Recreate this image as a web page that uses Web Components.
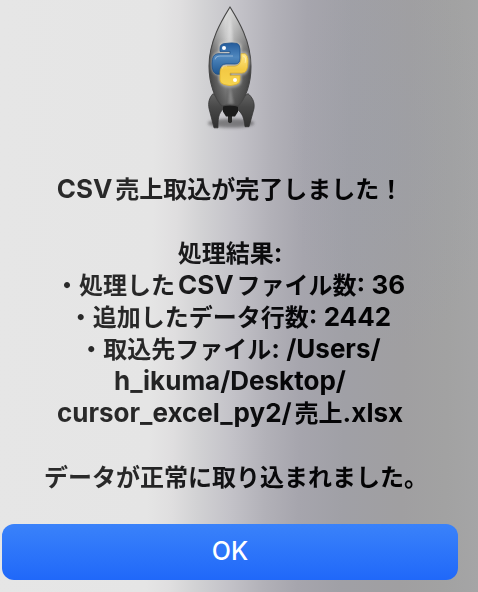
<!DOCTYPE html>
<html lang="ja">
<head>
<meta charset="utf-8">
<meta name="viewport" content="width=device-width, initial-scale=1">
<title>CSV売上取込</title>
<style>
html { min-height: 100%; }
body {
  margin: 0;
  min-height: 100vh;
  font-family: Inter, "Noto Sans CJK JP", sans-serif;
  background:
    radial-gradient(ellipse 22% 34% at 82% 26%, rgba(152,158,172,.25), rgba(152,158,172,0)),
    linear-gradient(91deg, #e6e6e6 0%, #e5e5e5 32%, #dfdedf 37%, #d2d2d4 42%, #c3c2c8 49%, #b2b1b8 56%, #a6a5ad 63%, #a0a0a6 72%, #a09fa1 84%, #a2a2a2 93%, #a5a5a6 100%);
}
</style>
</head>
<body>
<alert-dialog>
  <rocket-icon slot="icon"></rocket-icon>
  <alert-message>
    <message-line><latin-text gap-after>CSV</latin-text>売上取込が完了しました！</message-line>
    <message-line></message-line>
    <message-line>処理結果<latin-text>:</latin-text></message-line>
    <message-line>・処理した<latin-text gap-before gap-after>CSV</latin-text>ファイル数<latin-text>: 36</latin-text></message-line>
    <message-line>・追加したデータ行数<latin-text>: 2442</latin-text></message-line>
    <message-line>・取込先ファイル<latin-text gap-after>: /Users/<wbr>h_ikuma/Desktop/<wbr>cursor_excel_py2/</latin-text>売上<latin-text>.xlsx</latin-text></message-line>
    <message-line></message-line>
    <message-line closing>データが正常に取り込まれました。</message-line>
  </alert-message>
  <push-button slot="action">OK</push-button>
</alert-dialog>

<template id="dialog-template">
  <style>
    :host { display: flex; flex-direction: column; box-sizing: border-box; min-height: 100vh; padding: 4px 20px 12px 2px; text-align: center; }
    header { display: flex; justify-content: center; }
    main { padding: 42px 36px 30px; }
  </style>
  <header><slot name="icon"></slot></header>
  <main><slot></slot></main>
  <footer><slot name="action"></slot></footer>
</template>

<template id="message-template">
  <style>
    :host {
      display: block; font-size: 24px; font-weight: 700; line-height: 32px; color: #111;
      margin: 0 -12px; padding: 0 12px;
      background: linear-gradient(90deg, #2b2b2b 0%, #282828 28%, #141416 46%, #060608 64%, #000 100%);
      -webkit-background-clip: text; background-clip: text;
      -webkit-text-fill-color: transparent;
    }
  </style>
  <slot></slot>
</template>

<template id="line-template"><style>
    :host { display: block; min-height: 32px; }
    :host([closing]) { font-feature-settings: "halt"; }
  </style><slot></slot></template>

<template id="latin-template"><style>
    :host { display: inline; font-size: 26px; line-height: 26px; }
    :host([gap-before]) { margin-left: 3px; }
    :host([gap-after]) { margin-right: 3px; }
  </style><slot></slot></template>

<template id="button-template">
  <style>
    :host { display: block; }
    button {
      display: block; width: 100%; height: 56px; margin: 0; padding: 0 0 2px; border: 0; border-radius: 12px;
      background: linear-gradient(#3a82fa, #2068f9);
      color: #fff; font: 500 25px/32px Inter, "Noto Sans CJK JP", sans-serif;
    }
  </style>
  <button type="button"><slot></slot></button>
</template>

<template id="rocket-template">
  <style>
    :host { display: block; width: 64px; height: 128px; }
    svg { display: block; width: 100%; height: 100%; }
  </style>
  <svg viewBox="197 4 64 128" role="img" aria-label="Python">
    <defs>
      <linearGradient id="hull" x1="0" x2="1">
        <stop offset="0" stop-color="#4b4b4b"/><stop offset=".16" stop-color="#777"/><stop offset=".4" stop-color="#b5b5b5"/>
        <stop offset=".6" stop-color="#999"/><stop offset=".85" stop-color="#6c6c6c"/><stop offset="1" stop-color="#484848"/>
      </linearGradient>
      <linearGradient id="shade" x1="0" y1="0" x2="0" y2="1">
        <stop offset="0" stop-color="#fff" stop-opacity=".6"/><stop offset=".3" stop-color="#fff" stop-opacity=".25"/>
        <stop offset=".6" stop-color="#333" stop-opacity=".25"/><stop offset="1" stop-color="#222" stop-opacity=".6"/>
      </linearGradient>
      <linearGradient id="fin" x1="0" y1="0" x2="0" y2="1"><stop offset="0" stop-color="#636363"/><stop offset=".4" stop-color="#484848"/><stop offset="1" stop-color="#303030"/></linearGradient>
      <linearGradient id="blue" x1="0" y1="0" x2="0" y2="1"><stop offset="0" stop-color="#245c9c"/><stop offset=".45" stop-color="#4f87be"/><stop offset="1" stop-color="#205791"/></linearGradient>
      <linearGradient id="gold" x1="0" y1="0" x2="0" y2="1"><stop offset="0" stop-color="#ffe887"/><stop offset=".5" stop-color="#f3c944"/><stop offset="1" stop-color="#f6d450"/></linearGradient>
      <filter id="soft" x="-50%" y="-100%" width="200%" height="300%"><feGaussianBlur stdDeviation="1.6"/></filter>
      <filter id="glow" x="-30%" y="-30%" width="160%" height="160%"><feGaussianBlur stdDeviation="1.3"/></filter>
      <clipPath id="body"><path d="M229 7C222 17 208 36 208 59C208 74 214 88 221 95H237C245 87 250 74 250 59C250 36 236 17 229 7Z"/></clipPath>
    </defs>
    <g transform="translate(0 -1) scale(1 1.14)">
    <ellipse cx="230" cy="109" rx="23" ry="4" fill="#333" opacity=".5" filter="url(#soft)"/>
    <path d="M212 83C208 87 207 91 208 96L213 113H217C217 106 217 100 223 96L224 91Z" fill="url(#fin)" stroke="#333" stroke-width=".7"/>
    <path d="M247 83C251 86 254 90 253 96L248 112H244C243 105 242 100 235 96L234 91Z" fill="url(#fin)" stroke="#333" stroke-width=".7"/>
    <path d="M227 101H231V108Q229 110 227 108Z" fill="#292929"/>
    <path d="M222 92H237V99L234 103H225L222 99Z" fill="#1c1c1c"/>
    <path d="M229 7C222 17 208 36 208 59C208 74 214 88 221 94Q229 92 237 94C245 87 250 74 250 59C250 36 236 17 229 7Z" fill="url(#hull)"/>
    <path d="M229 7C222 17 208 36 208 59C208 74 214 88 221 94Q229 92 237 94C245 87 250 74 250 59C250 36 236 17 229 7Z" fill="url(#shade)" stroke="#454545" stroke-width="1"/>
    <g clip-path="url(#body)">
      <path d="M229 15Q226 27 226 39H232Q232 27 229 15Z" fill="#fff" opacity=".35" filter="url(#glow)"/>
      <path d="M229 76L227 92H233Z" fill="#ddd" opacity=".3" filter="url(#glow)"/>
    </g>
    <g stroke="#e0e0da" stroke-width="3" opacity=".55" filter="url(#glow)">
      <path d="M220 40Q230 37 239 41V52Q239 57 234 57H225Q219 57 219 65H215Q210 62 212 53Q213 48 219 48H229V46H219Z"/>
      <path d="M240 48H245Q249 53 246 61Q245 65 240 65H231V67H239V72Q239 76 228 76Q219 75 219 70V64Q219 59 225 59H235Q240 58 240 52Z"/>
    </g>
    <path d="M219 46V43Q219 39 225 39Q231 38 236 39Q239 40 239 44V52Q239 57 234 57H225Q219 57 219 63V66H216Q211 65 211 57Q211 48 217 48H229V46Z" fill="url(#blue)" stroke="#194d86" stroke-width=".7"/>
    <path d="M240 48H244Q247 49 247 55Q247 65 241 65H229V67H239V71Q239 74 235 75Q229 77 223 75Q219 74 219 71V64Q219 59 225 59H234Q240 58 240 52Z" fill="url(#gold)" stroke="#dcae29" stroke-width=".7"/>
    <path d="M214 53Q215 50 219 50H232M221 61Q222 58 226 59M242 50Q246 51 244 56" fill="none" stroke="#fff" stroke-width="1" opacity=".4"/>
    <ellipse cx="223" cy="43" rx="2" ry="1.7" fill="#fff"/><ellipse cx="234" cy="71" rx="2" ry="1.7" fill="#fff"/>
    </g>
  </svg>
</template>

<script>
const define = (name, templateId) => customElements.define(name, class extends HTMLElement {
  constructor() {
    super();
    this.attachShadow({ mode: "open" }).append(document.getElementById(templateId).content.cloneNode(true));
  }
});
define("alert-dialog", "dialog-template");
define("alert-message", "message-template");
define("message-line", "line-template");
define("latin-text", "latin-template");
define("push-button", "button-template");
define("rocket-icon", "rocket-template");
</script>
</body>
</html>
